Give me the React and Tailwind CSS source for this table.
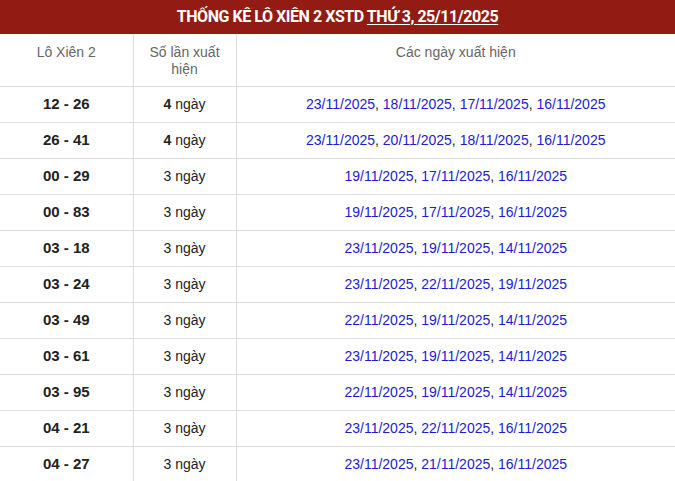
const rows = [
  { pair: "12 - 26", count: 4, dates: ["23/11/2025", "18/11/2025", "17/11/2025", "16/11/2025"] },
  { pair: "26 - 41", count: 4, dates: ["23/11/2025", "20/11/2025", "18/11/2025", "16/11/2025"] },
  { pair: "00 - 29", count: 3, dates: ["19/11/2025", "17/11/2025", "16/11/2025"] },
  { pair: "00 - 83", count: 3, dates: ["19/11/2025", "17/11/2025", "16/11/2025"] },
  { pair: "03 - 18", count: 3, dates: ["23/11/2025", "19/11/2025", "14/11/2025"] },
  { pair: "03 - 24", count: 3, dates: ["23/11/2025", "22/11/2025", "19/11/2025"] },
  { pair: "03 - 49", count: 3, dates: ["22/11/2025", "19/11/2025", "14/11/2025"] },
  { pair: "03 - 61", count: 3, dates: ["23/11/2025", "19/11/2025", "14/11/2025"] },
  { pair: "03 - 95", count: 3, dates: ["22/11/2025", "19/11/2025", "14/11/2025"] },
  { pair: "04 - 21", count: 3, dates: ["23/11/2025", "22/11/2025", "16/11/2025"] },
  { pair: "04 - 27", count: 3, dates: ["23/11/2025", "21/11/2025", "16/11/2025"] },
];

function DateList({ dates }) {
  return (
    <span>
      {dates.map((d, i) => (
        <span key={i}>
          <span className="text-[#1c1cd0]">{d}</span>
          {i < dates.length - 1 && <span className="text-[#222]">, </span>}
        </span>
      ))}
    </span>
  );
}

export default function App() {
  return (
    <div className="w-[675px] h-[481px] overflow-hidden bg-white font-['Liberation_Sans',Arial,sans-serif] text-[14px]">
      <div className="h-[34px] bg-[#921c13] flex items-center justify-center text-white font-['Roboto',sans-serif] font-bold text-[16px] tracking-[-0.45px]">
        <span>
          THỐNG KÊ LÔ XIÊN 2 XSTD <span className="underline underline-offset-2">THỨ 3, 25/11/2025</span>
        </span>
      </div>
      <table className="w-full border-collapse">
        <thead>
          <tr className="h-[52px] text-[#666] align-top">
            <th className="w-[133px] font-normal pt-[10px] leading-[17px] border-r border-b border-[#ddd]">Lô Xiên 2</th>
            <th className="w-[103px] font-normal pt-[10px] px-[12px] leading-[17px] border-r border-b border-[#ddd]">Số lần xuất hiện</th>
            <th className="font-normal pt-[10px] leading-[17px] border-b border-[#ddd]">Các ngày xuất hiện</th>
          </tr>
        </thead>
        <tbody>
          {rows.map((r) => (
            <tr key={r.pair} className="h-[36px]">
              <td className="text-center font-bold text-[15px] text-[#222] border-r border-b border-[#ddd]">{r.pair}</td>
              <td className="text-center text-[#222] border-r border-b border-[#ddd]">
                <span className={r.count === 4 ? "font-bold" : ""}>{r.count}</span> ngày
              </td>
              <td className="text-center border-b border-[#ddd]">
                <DateList dates={r.dates} />
              </td>
            </tr>
          ))}
        </tbody>
      </table>
    </div>
  );
}
